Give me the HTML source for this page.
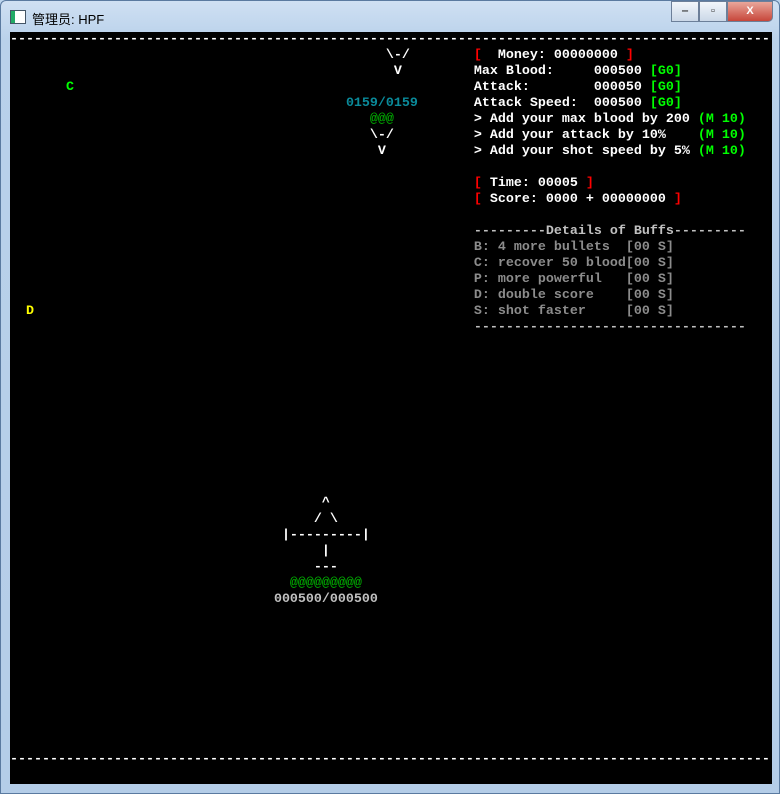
<!DOCTYPE html>
<html><head><meta charset="utf-8"><style>
html,body{margin:0;padding:0;width:780px;height:794px;overflow:hidden;background:#bcd5ee;}
.win{position:absolute;left:0;top:0;width:778px;height:792px;border:1px solid #5a7aa0;border-radius:6px 6px 0 0;background:linear-gradient(#cfe0f3,#b9d1ea 40px,#b4cde8);}
.title{position:absolute;left:31px;top:8px;font:13px "Liberation Sans","Noto Sans CJK SC",sans-serif;color:#000;}
.ico{position:absolute;left:9px;top:9px;width:14px;height:12px;border:1px solid #456;background:linear-gradient(90deg,#2a6 0 4px,#fff 4px);}
.btns{position:absolute;right:6px;top:0;height:20px;display:flex;}
.b{width:26px;height:19px;border:1px solid #6c7f99;background:linear-gradient(#f2f6fb,#cbd8e8);font:bold 11px "Liberation Sans",sans-serif;text-align:center;line-height:18px;color:#333;}
.x{width:44px;background:linear-gradient(#e9a79b,#c7463a);color:#fff;border-radius:0 0 5px 0;}
.con{position:absolute;left:9px;top:31px;width:762px;height:752px;background:#000;overflow:hidden;}
.r{position:absolute;left:0px;height:16px;line-height:16px;white-space:pre;font:bold 13.33px "Liberation Mono",monospace;color:#fff;}
.w{color:#fff}.red{color:#f00}.g{color:#0f0}.t{color:#0a8a9a}.dg{color:#0a0}.y{color:#ff0}.gr{color:#c0c0c0}.gb{color:#8c8c8c}
</style></head><body>
<div class="win">
<div class="ico"></div><div class="title">管理员: HPF</div>
<div class="btns"><div class="b">‒</div><div class="b">▫</div><div class="b x">X</div></div>
<div class="con">
<div class="r" style="top:0px">-----------------------------------------------------------------------------------------------</div>
<div class="r" style="top:16px">                                               \-/        <span class="red">[</span>  Money: 00000000 <span class="red">]</span></div>
<div class="r" style="top:32px">                                                V         Max Blood:     000500 <span class="g">[G0]</span></div>
<div class="r" style="top:48px">       <span class="g">C</span>                                                  Attack:        000050 <span class="g">[G0]</span></div>
<div class="r" style="top:64px">                                          <span class="t">0159/0159</span>       Attack Speed:  000500 <span class="g">[G0]</span></div>
<div class="r" style="top:80px">                                             <span class="dg">@@@</span>          &gt; Add your max blood by 200 <span class="g">(M 10)</span></div>
<div class="r" style="top:96px">                                             \-/          &gt; Add your attack by 10%    <span class="g">(M 10)</span></div>
<div class="r" style="top:112px">                                              V           &gt; Add your shot speed by 5% <span class="g">(M 10)</span></div>
<div class="r" style="top:144px">                                                          <span class="red">[</span> Time: 00005 <span class="red">]</span></div>
<div class="r" style="top:160px">                                                          <span class="red">[</span> Score: 0000 + 00000000 <span class="red">]</span></div>
<div class="r gr" style="top:192px">                                                          ---------Details of Buffs---------</div>
<div class="r gb" style="top:208px">                                                          B: 4 more bullets  [00 S]</div>
<div class="r gb" style="top:224px">                                                          C: recover 50 blood[00 S]</div>
<div class="r gb" style="top:240px">                                                          P: more powerful   [00 S]</div>
<div class="r gb" style="top:256px">                                                          D: double score    [00 S]</div>
<div class="r gb" style="top:272px">  <span class="y">D</span>                                                       S: shot faster     [00 S]</div>
<div class="r gr" style="top:288px">                                                          ----------------------------------</div>
<div class="r" style="top:464px">                                       ^</div>
<div class="r" style="top:480px">                                      / \</div>
<div class="r" style="top:496px">                                  |---------|</div>
<div class="r" style="top:512px">                                       |</div>
<div class="r" style="top:528px">                                      ---</div>
<div class="r dg" style="top:544px">                                   @@@@@@@@@</div>
<div class="r gr" style="top:560px">                                 000500/000500</div>
<div class="r" style="top:720px">-----------------------------------------------------------------------------------------------</div>
</div>
</div>
</body></html>
